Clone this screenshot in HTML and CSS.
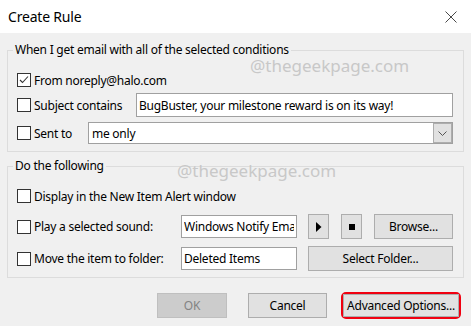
FILE: index.html
```html
<!DOCTYPE html>
<html lang="en">
<head>
  <meta charset="UTF-8" />
  <title>Create Rule</title>
  <link rel="stylesheet" href="styles.css">
</head>
<body>

  <div class="dialog" role="dialog" aria-label="Create Rule">
    <div class="titlebar">
      <span class="title">Create Rule</span>
      <button type="button" class="close" aria-label="Close">
        <svg width="12" height="12" viewBox="0 0 12 12"><path d="M0.5 0.5 L11.5 11.5 M11.5 0.5 L0.5 11.5" stroke="#333" stroke-width="0.9" fill="none"/></svg>
      </button>
    </div>

    <fieldset class="group group-when">
      <legend>When I get email with all of the selected conditions</legend>

      <div class="row row-from">
        <label class="opt">
          <span class="box"><svg width="12" height="12" viewBox="0 0 12 12"><path d="M2 6 L4.5 8.5 L10 2.5" stroke="#333" stroke-width="1.1" fill="none"/></svg></span>
          From noreply@halo.com
        </label>
      </div>

      <div class="row row-subject">
        <label class="opt w-subject"><span class="box"></span>Subject contains</label>
        <input type="text" class="field grow" value="BugBuster, your milestone reward is on its way!" />
      </div>

      <div class="row row-sent">
        <label class="opt w-sent"><span class="box"></span>Sent to</label>
        <div class="combo grow">
          <span class="combo-text">me only</span>
          <span class="drop"><svg width="9" height="5" viewBox="0 0 9 5"><path d="M0.5 0.5 L4.5 4.5 L8.5 0.5" stroke="#555" stroke-width="1" fill="none"/></svg></span>
        </div>
      </div>
    </fieldset>

    <fieldset class="group group-do">
      <legend>Do the following</legend>

      <div class="row row-alert">
        <label class="opt"><span class="box"></span>Display in the New Item Alert window</label>
      </div>

      <div class="row row-sound">
        <label class="opt w-sound"><span class="box"></span>Play a selected sound:</label>
        <input type="text" class="field short" value="Windows Notify Email" readonly />
        <button type="button" class="btn icon-btn" aria-label="Play">
          <svg width="6" height="10" viewBox="0 0 6 10"><path d="M0 0 L5.5 5 L0 10 Z" fill="#000"/></svg>
        </button>
        <button type="button" class="btn icon-btn" aria-label="Stop">
          <svg width="6" height="6" viewBox="0 0 6 6"><rect width="6" height="6" fill="#000"/></svg>
        </button>
        <button type="button" class="btn browse-btn">Browse...</button>
      </div>

      <div class="row row-move">
        <label class="opt w-sound"><span class="box"></span>Move the item to folder:</label>
        <input type="text" class="field short" value="Deleted Items" readonly />
        <button type="button" class="btn folder-btn">Select Folder...</button>
      </div>
    </fieldset>

    <div class="actions">
      <button type="button" class="btn ok-btn" disabled>OK</button>
      <button type="button" class="btn cancel-btn">Cancel</button>
      <span class="highlight"><button type="button" class="btn adv-btn">Advanced Options...</button></span>
    </div>

    <span class="watermark mark-one">@thegeekpage.com</span>
    <span class="watermark mark-two">@thegeekpage.com</span>
  </div>

</body>
</html>
```

FILE: styles.css
```css
body {
  margin: 0;
  width: 471px;
  height: 326px;
  background-color: #f0f0f0;
  font-family: 'Noto Sans', sans-serif;
  font-size: 12px;
  letter-spacing: -0.25px;
  color: #000;
  overflow: hidden;
}

.dialog {
  position: relative;
  height: 326px;
}

.titlebar {
  height: 33px;
  background-color: #fff;
  display: flex;
  align-items: center;
  justify-content: space-between;
  padding-left: 8px;
}

.title {
  font-size: 14px;
  letter-spacing: -0.2px;
}

.close {
  width: 40px;
  height: 33px;
  padding: 0;
  border: none;
  background: transparent;
  display: flex;
  align-items: center;
  justify-content: center;
}

.group {
  margin: 9px 7px 0;
  padding: 10px 10px 6px 5px;
  border: 1px solid #dcdcdc;
  min-width: 0;
}

.group-do {
  margin-top: 6px;
}

legend {
  padding: 0 2px;
  line-height: 16px;
}

.row {
  display: flex;
  align-items: center;
  padding-left: 4px;
}

.row-from,
.row-alert {
  height: 24px;
}

.row-subject {
  height: 26px;
}

.row-sent {
  height: 24px;
  margin-top: 3px;
}

.row-sound {
  height: 25px;
  margin-top: 6px;
}

.row-move {
  height: 25px;
  margin-top: 7px;
}

.opt {
  display: flex;
  align-items: center;
  white-space: nowrap;
  flex-shrink: 0;
}

.w-subject { width: 119px; }
.w-sent { width: 71px; }
.w-sound { width: 164px; }

.box {
  width: 14px;
  height: 14px;
  box-sizing: border-box;
  border: 1px solid #333;
  background-color: #fff;
  margin-right: 3px;
  display: flex;
  align-items: center;
  justify-content: center;
}

.field {
  height: 24px;
  box-sizing: border-box;
  border: 1px solid #a0a0a0;
  background-color: #fff;
  font: inherit;
  letter-spacing: inherit;
  color: #000;
  padding: 0 2px;
  margin: 0;
  outline: none;
  min-width: 0;
}

.short {
  width: 116px;
  height: 23px;
  margin-right: 11px;
}

.grow {
  flex: 1;
}

.combo {
  height: 22px;
  box-sizing: border-box;
  border: 1px solid #a0a0a0;
  background-color: #fff;
  display: flex;
  align-items: center;
}

.combo-text {
  flex: 1;
  padding-left: 3px;
}

.drop {
  width: 19px;
  height: 20px;
  box-sizing: border-box;
  border: 1px solid #adadad;
  background-color: #e1e1e1;
  display: flex;
  align-items: center;
  justify-content: center;
}

.btn {
  height: 25px;
  box-sizing: border-box;
  border: 1px solid #adadad;
  background-color: #e1e1e1;
  font: inherit;
  letter-spacing: inherit;
  color: #000;
  padding: 0;
  margin: 0;
}

.icon-btn {
  width: 21px;
  margin-right: 12px;
  display: flex;
  align-items: center;
  justify-content: center;
}

.browse-btn { width: 79px; }
.folder-btn { width: 145px; }

.actions {
  display: flex;
  align-items: center;
  justify-content: flex-end;
  height: 27px;
  margin-top: 14px;
  padding-right: 10px;
}

.ok-btn {
  width: 70px;
  margin-right: 21px;
  background-color: #cccccc;
  border-color: #bfbfbf;
  color: #838383;
}

.cancel-btn {
  width: 79px;
  margin-right: 14px;
}

.highlight {
  display: flex;
  border: 2px solid #f00010;
  border-radius: 5px;
}

.adv-btn {
  width: 116px;
  height: 23px;
}

.watermark {
  position: absolute;
  font-size: 17px;
  line-height: 20px;
  letter-spacing: 0;
  color: #c8c8c8;
  white-space: nowrap;
  pointer-events: none;
}

.mark-one {
  left: 250px;
  top: 56px;
}

.mark-two {
  left: 177px;
  top: 161px;
}
```
